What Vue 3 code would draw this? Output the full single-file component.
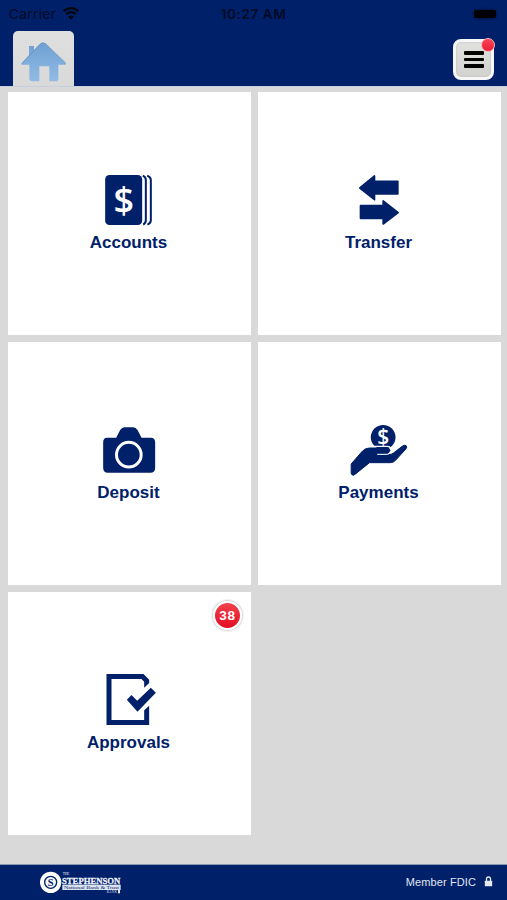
<template>
  <div class="app">
    <header class="header">
      <div class="status">
        <div class="carrier">
          <span>Carrier</span>
          <svg class="wifi" viewBox="186 18 54 40">
            <path d="M190 31 Q213 12 236 31" fill="none" stroke="#010611" stroke-width="7" />
            <path d="M198 40 Q213 27 228 40" fill="none" stroke="#010611" stroke-width="6.5" />
            <path d="M204 48 Q213 41 222 48 L213 57z" fill="#010611" />
          </svg>
        </div>
        <span class="time">10:27 AM</span>
        <span class="battery"></span>
      </div>
      <div class="nav">
        <button class="homeTab" aria-label="Home">
          <svg class="house" viewBox="60 123 144 126">
            <defs>
              <linearGradient id="houseFill" x1="0" y1="0" x2="0" y2="1">
                <stop offset="0" stop-color="#6fa0d3" />
                <stop offset="1" stop-color="#91bbe4" />
              </linearGradient>
            </defs>
            <path
              d="M87 138h15v12l19-19q8-6 16 0l61 59q2 4-3 4h-20v42q0 8-8 8h-19v-45h-30v45h-21q-9 0-9-9v-41H67q-6-1-2-5l22-23z"
              fill="url(#houseFill)"
            />
            <path d="M67 190l54-59q8-6 16 0l60 58" fill="none" stroke="#557ca5" stroke-width="2" opacity=".65" />
          </svg>
        </button>
        <button class="menu" aria-label="Menu" @click="menuOpen = !menuOpen">
          <span class="lines"><i></i><i></i><i></i></span>
          <span class="dot"></span>
        </button>
      </div>
    </header>

    <main class="grid">
      <button v-for="tile in tiles" :key="tile.name" class="tile">
        <svg class="icon" viewBox="60.5 21 180 168">
          <g v-if="tile.name === 'Accounts'">
            <rect x="76" y="30" width="111" height="150" rx="13" />
            <path d="M189 32q9 4 9 13v121q0 9-8 13M202 32q11 4 11 13v121q0 9-10 13" fill="none" stroke="#00206a" stroke-width="6" />
            <text x="132" y="144" font-size="108" class="dollar">$</text>
          </g>
          <g v-else-if="tile.name === 'Transfer'" stroke="#00206a" stroke-width="5" stroke-linejoin="round">
            <path d="M90 69l44-36v16h70v38h-70v17z" />
            <path d="M205 143l-45-35v14H92v38h68v17z" />
          </g>
          <g v-else-if="tile.name === 'Deposit'">
            <path d="M81 68h28l12-23q5-8 13-8h26q8 0 13 8l12 23h28q13 0 13 14v76q0 15-14 15H84q-14 0-14-15V82q0-14 11-14z" />
            <circle cx="147" cy="119" r="37" fill="none" stroke="#fff" stroke-width="9" />
          </g>
          <g v-else-if="tile.name === 'Payments'">
            <circle cx="160" cy="67" r="37" />
            <text x="160" y="88" font-size="63" class="dollar">$</text>
            <path
              d="M64 147l34-39q9-9 21-9h53q9 1 8 8-1 9-12 9h-23v3h30q10 0 16-5l26-20q6-6 12-2 4 4-1 10l-31 34q-6 7-15 7h-63l-42 34q-6 6-11 2-3-3-2-14z"
              stroke="#00206a"
              stroke-width="3"
            />
            <path d="M142 118h31q7-1 8-8" fill="none" stroke="#fff" stroke-width="3" />
            <path d="M112 94h60q8 0 11 6" fill="none" stroke="#fff" stroke-width="4" />
          </g>
          <g v-else>
            <path d="M80 27h111l17 17v10l-15 14V50l-8-8H95v123h98v-29l15-14v58H80z" />
            <path d="M141 104l14-14 17 17 41-39 15 15-55 57z" />
          </g>
        </svg>
        <span class="label">{{ tile.name }}</span>
        <span v-if="tile.count" class="badge">{{ tile.count }}</span>
      </button>
    </main>

    <footer class="footer">
      <svg class="logo" viewBox="30 41 246 78">
        <circle cx="62" cy="81" r="32" fill="#fff" />
        <circle cx="62" cy="81" r="18" fill="#f5f7fb" stroke="#00206a" stroke-width="4" />
        <text x="62" y="92" font-size="31" font-weight="700" text-anchor="middle" class="serif navy">S</text>
        <text x="98" y="58" font-size="11" textLength="20" class="serif">THE</text>
        <text x="96" y="85" font-size="27" font-weight="700" textLength="175" lengthAdjust="spacingAndGlyphs" class="serif name">STEPHENSON</text>
        <rect x="97" y="88" width="175" height="16" fill="#dce3f0" />
        <text x="102" y="101" font-size="14" textLength="165" lengthAdjust="spacingAndGlyphs" class="serif navy">National Bank &amp; Trust</text>
        <text x="230" y="114" font-size="9" textLength="31" class="serif">BANK</text>
        <rect x="264" y="104" width="6" height="10" fill="#dce3f0" />
      </svg>
      <div class="fdic">
        <span>Member FDIC</span>
        <svg class="lock" viewBox="281 65 26 33">
          <rect x="283" y="79" width="22" height="17" rx="2" fill="#e5e8ef" />
          <path d="M288 80v-6q0-6 6-6t6 6v6" fill="none" stroke="#e5e8ef" stroke-width="4" />
        </svg>
      </div>
    </footer>
  </div>
</template>

<script setup>
import { ref } from 'vue'

const menuOpen = ref(false)

const tiles = [
  { name: 'Accounts' },
  { name: 'Transfer' },
  { name: 'Deposit' },
  { name: 'Payments' },
  { name: 'Approvals', count: 38 },
]
</script>

<style>
body {
  margin: 0;
}
</style>

<style scoped>
.app {
  display: flex;
  flex-direction: column;
  width: 507px;
  height: 900px;
  overflow: hidden;
  background: #d9d9d9;
  font-family: "Liberation Sans", Arial, sans-serif;
}

button {
  padding: 0;
  border: none;
  font-family: inherit;
  cursor: pointer;
}

svg {
  display: block;
}

.header {
  height: 86px;
  flex-shrink: 0;
  background: #00206a;
}

.status {
  display: grid;
  grid-template-columns: 1fr auto 1fr;
  align-items: center;
  height: 28px;
  padding: 0 11px 0 9px;
  box-sizing: border-box;
  color: #010a24;
  font-family: Inter, sans-serif;
  font-size: 13.5px;
}

.carrier {
  display: flex;
  align-items: center;
  gap: 6px;
  letter-spacing: 0.4px;
}

.wifi {
  width: 18px;
  height: 13px;
  margin-top: -2px;
}

.time {
  padding-left: 2px;
  font-size: 13.5px;
  font-weight: 600;
  letter-spacing: 0.6px;
}

.battery {
  justify-self: end;
  width: 22px;
  height: 8px;
  margin-top: -1px;
  border-radius: 2px;
  background: #000005;
  box-shadow: 0 0 3px #000a25;
}

.nav {
  display: flex;
  justify-content: space-between;
  height: 58px;
  padding: 0 13px 0 13px;
}

.homeTab {
  display: flex;
  align-items: flex-start;
  width: 61px;
  height: 56px;
  margin-top: 3px;
  border-radius: 5px 5px 0 0;
  background: linear-gradient(#dfdfdf, #d9d9d9);
}

.house {
  width: 48px;
  height: 42px;
  margin: 10px 0 0 7px;
}

.menu {
  position: relative;
  display: flex;
  align-items: center;
  justify-content: center;
  width: 41px;
  height: 41px;
  margin-top: 11px;
  border: 3px solid #f7f7f9;
  border-radius: 8px;
  background: linear-gradient(#e1e1e0, #d2d2cf);
  box-shadow: inset 0 0 2px #b5b5b5;
}

.lines {
  display: flex;
  flex-direction: column;
  gap: 3px;
}

.lines i {
  width: 20px;
  height: 3.5px;
  border-radius: 1px;
  background: #000;
}

.dot {
  position: absolute;
  top: -4px;
  right: -4px;
  width: 12px;
  height: 12px;
  border: 1px solid #f4b1bd;
  border-radius: 50%;
  background: linear-gradient(#fa4558, #e91e35);
}

.grid {
  display: grid;
  grid-template-columns: 243px 243px;
  grid-auto-rows: 243px;
  align-content: start;
  gap: 7px;
  flex: 1;
  padding: 5px 0 0 8px;
  border-top: 1px solid #c8cedb;
  box-sizing: border-box;
}

.tile {
  position: relative;
  display: flex;
  flex-direction: column;
  align-items: center;
  justify-content: flex-start;
  padding-top: 80px;
  background: #fff;
}

.icon {
  width: 60px;
  height: 56px;
  fill: #00206a;
}

.dollar {
  fill: #fff;
  font-family: "Open Sans", sans-serif;
  font-weight: 600;
  text-anchor: middle;
  stroke: none;
}

.label {
  margin-top: 5px;
  padding-right: 2px;
  color: #00206a;
  font-size: 17px;
  font-weight: 700;
  line-height: 20px;
}

.badge {
  position: absolute;
  top: 9px;
  right: 9px;
  width: 25px;
  height: 25px;
  border: 2px solid #fff;
  border-radius: 50%;
  background: linear-gradient(#f0434e, #e40c22);
  box-shadow: 0 0 2px 1px #d0d0d0;
  color: #fff;
  font-size: 13.5px;
  font-weight: 700;
  line-height: 25px;
  letter-spacing: 0.8px;
  text-align: center;
}

.footer {
  display: flex;
  align-items: center;
  justify-content: space-between;
  flex-shrink: 0;
  height: 36px;
  padding: 0 14px 2px 40px;
  border-top: 1px solid #8998b9;
  box-sizing: border-box;
  background: #00206a;
}

.logo {
  width: 82px;
  height: 26px;
}

.serif {
  fill: #f1f4fa;
  font-family: "Liberation Serif", serif;
}

.name {
  stroke: #f1f4fa;
  stroke-width: 0.8;
}

.navy {
  fill: #00206a;
}

.fdic {
  display: flex;
  align-items: center;
  gap: 8px;
  color: #e1e6ef;
  font-size: 11px;
  letter-spacing: 0.1px;
}

.lock {
  width: 9px;
  height: 11px;
}
</style>
